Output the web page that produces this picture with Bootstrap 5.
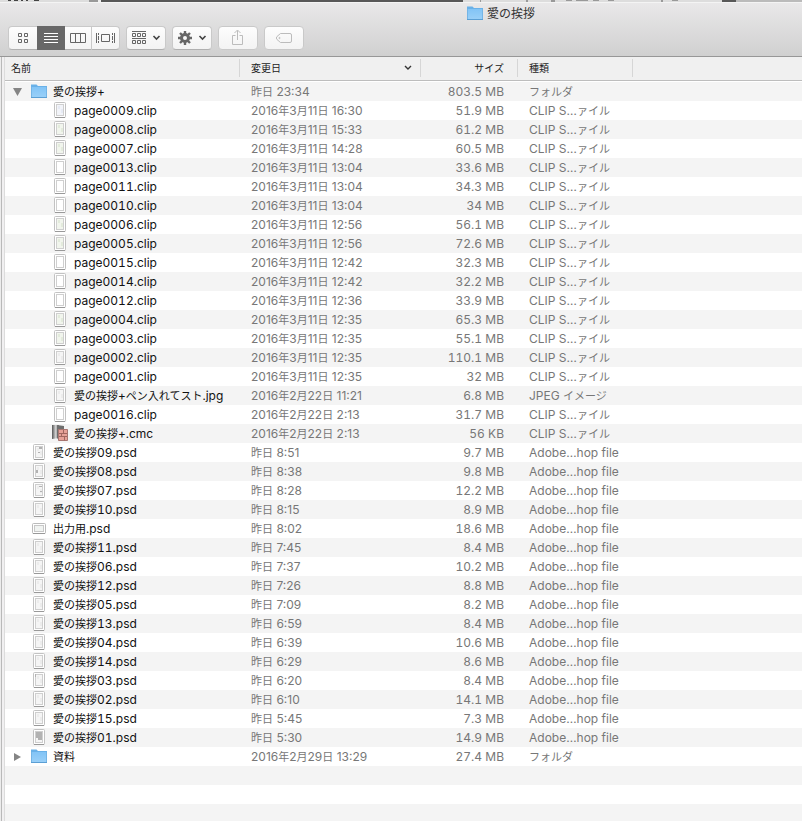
<!DOCTYPE html>
<html lang="ja">
<head>
<meta charset="utf-8">
<meta name="viewport" content="width=device-width, initial-scale=1">
<title>愛の挨拶</title>
<link href="https://cdn.jsdelivr.net/npm/bootstrap@5.3.0/dist/css/bootstrap.min.css" rel="stylesheet">
<style>
  body { font-family: Inter, "Noto Sans CJK JP", sans-serif; font-size: 12px; line-height: 19px; color: #111; background: #fff; }
  .behind { height: 2px; background: #585858; }
  .behind svg { display: block; }
  .toolbar-area { background: linear-gradient(#e9e8e9, #d0d0d0); border-top: 1px solid #f4f4f4; border-bottom: 1px solid #979797; padding-bottom: 6px; }
  .window-title { font-size: 12px; line-height: 22px; height: 23px; gap: 2px; padding-left: 198px; color: #333; font-weight: 400; }
  .tool { --bs-btn-padding-x: 0; --bs-btn-padding-y: 0; --bs-btn-border-radius: 4px; --bs-btn-line-height: 1;
    --bs-btn-border-color: #c9c9c9; --bs-btn-color: #666; --bs-btn-bg: #fbfbfb;
    --bs-btn-active-bg: #686868; --bs-btn-active-color: #fff; --bs-btn-active-border-color: #686868;
    --bs-btn-disabled-bg: #f5f5f5; --bs-btn-disabled-color: #bcbcbc; --bs-btn-disabled-border-color: #c9c9c9; --bs-btn-disabled-opacity: 1;
    height: 24px; width: 40px; display: flex; align-items: center; justify-content: center; border-bottom-color: #b0b0b0; }
  .tool:not(.active) { background-image: linear-gradient(#fdfdfd, #f3f3f3); }
  .view-modes .tool { width: 28px; flex: none; }
  .view-modes .tool:first-child { width: 30px; }
  .view-modes .tool:last-child { width: 29px; }
  .tool-bar { gap: 6px; padding-left: 8px; }
  .sidebar-edge { width: 5px; background: linear-gradient(90deg, #ececec 0 1px, #b9b9b9 1px 2px, #f1f0f1 2px 4px, #dcdcdc 4px 5px); }
  .file-pane { min-height: calc(100vh - 57px); background: repeating-linear-gradient(#f4f4f4 0 19px, #fff 19px 38px) 0 25px no-repeat; }
  .file-table { table-layout: fixed; width: 100%; margin: 0; }
  .file-table th { height: 23px; padding: 0; font-weight: 400; font-size: 10px; line-height: 22px; background: #f0f0f0; border-bottom: 1px solid #bdbdbd; color: #222; }
  .head-cell { display: flex; justify-content: space-between; align-items: center; width: 100%; height: 18px; line-height: 18px; border: 0; border-right: 1px solid #d6d6d6; background: none; padding: 0 8px 0 11px; color: inherit; }
  .head-cell.name-head { padding-left: 6px; }
  .head-cell.size-head { justify-content: flex-end; padding-right: 13px; }
  .head-gap td { height: 2px; padding: 0; background: #fff; }
  .file-row td { height: 19px; padding: 0 0 0 11px; line-height: 18px; vertical-align: middle; white-space: nowrap; color: #777; }
  .file-row td:first-child { color: #111; padding-left: 7px; }
  .file-row td:first-child, .file-row td:nth-child(3) { font-variant-numeric: tabular-nums; }
  .file-row td:nth-child(3) { text-align: right; padding: 0 14px 0 0; }
  .name-cell { height: 19px; gap: 4px; }
  .ja { font-size: 11px; line-height: 1; }
  .twist { width: 13px; height: 19px; }
  .file-icon { width: 20px; height: 19px; flex: none; }
  .nested { padding-left: 21px; }
  .col-name { width: 235px; } .col-date { width: 181px; } .col-size { width: 97px; } .col-kind { width: 115px; }
</style>
<script src="https://cdn.jsdelivr.net/npm/bootstrap@5.3.0/dist/js/bootstrap.bundle.min.js"></script>
</head>
<body class="overflow-hidden">

<svg class="visually-hidden" aria-hidden="true">
  <defs>
    <linearGradient id="folderFill" x1="0" y1="0" x2="0" y2="1"><stop offset="0" stop-color="#82c4f6"/><stop offset="1" stop-color="#9ad0f8"/></linearGradient>
    <linearGradient id="metalFill"><stop offset="0" stop-color="#555"/><stop offset=".5" stop-color="#ccc"/><stop offset="1" stop-color="#888"/></linearGradient>
  </defs>
  <symbol id="folder" viewBox="0 0 20 19">
    <path d="M2 2.500h5.500l1.500 1.500h9v12H2z" fill="#69b1e8"/>
    <path d="M2 5h16v10.500H2z" fill="url(#folderFill)"/>
    <path d="M2 15.500h16" stroke="#5b9fd4"/><path d="M2.500 5v10M17.500 5v10" stroke="#74b5e6"/>
  </symbol>
  <symbol id="page" viewBox="0 0 20 19">
    <rect x="4.500" y="1.500" width="11" height="15" rx="1" fill="#fff" stroke="#c2c2c2"/>
    <path d="M5 16.500h10" stroke="#999"/>
    <rect x="6.500" y="3.500" width="7" height="11" fill="none" stroke="#cfcfcf"/>
  </symbol>
  <symbol id="landscape" viewBox="0 0 20 19">
    <rect x="3.500" y="4.500" width="13" height="10" rx="1" fill="#fff" stroke="#bbb"/>
    <path d="M4 14.500h12" stroke="#999"/>
    <rect x="5.500" y="6.500" width="9" height="6" fill="#f0f3f1" stroke="#c8c8c8"/>
  </symbol>
  <symbol id="comic" viewBox="0 0 20 19">
    <path d="M2 1h7v13l-7 1z" fill="url(#metalFill)"/><path d="M7 1l7 1v12l-5 2-2-2z" fill="#6e6e6e"/>
    <path d="M8.500 5.500h9v11h-9z" fill="#e5a198" stroke="#a87570"/>
    <path d="M9 9.500h8M9 12.500h8M13.500 6v3.500M11.500 9.500v3M14.500 12.500v4" stroke="#a06660"/>
  </symbol>
</svg>

<div class="behind">
  <svg width="802" height="2" aria-hidden="true">
    <path d="M0 0h89v2H0zM463 0h259v2H463z" fill="#ddd"/><path d="M89 0h9v2h-9z" fill="#999"/><path d="M98 0h3v2h-3z" fill="#eee"/>
    <path d="M736 0h66v2h-66z" fill="#bbb"/><path d="M8 0h3v1H8zM14 0h4v1h-4zM21 0h2v1h-2zM26 0h2v1h-2zM34 0h5v1h-5z" fill="#444"/>
    <path d="M480 0h1v2h-1zM526 0h2v2h-2zM551 0h4v2h-4zM566 0h6v1h-6zM576 0h12v1h-12zM593 0h6v1h-6zM608 0h6v1h-6zM661 0h2v2h-2zM672 0h6v1h-6z" fill="#999"/>
  </svg>
</div>

<header class="toolbar-area">
  <h1 class="window-title d-flex justify-content-center align-items-start m-0">
    <svg width="20" height="21" aria-hidden="true"><use href="#folder"/></svg><span>愛の挨拶</span>
  </h1>
  <div class="tool-bar d-flex" role="toolbar" aria-label="ツールバー">
    <div class="btn-group view-modes" role="group" aria-label="表示">
      <button type="button" class="btn tool" aria-label="アイコン"><svg width="12" height="12" fill="none" stroke="currentColor"><path d="M1.500 1.500h3v3h-3zM7.500 1.500h3v3h-3zM1.500 7.500h3v3h-3zM7.500 7.500h3v3h-3z"/></svg></button>
      <button type="button" class="btn tool active" aria-label="リスト" aria-pressed="true"><svg width="14" height="12" stroke="currentColor"><path d="M0 1.500h14M0 4.500h14M0 7.500h14M0 10.500h14"/></svg></button>
      <button type="button" class="btn tool" aria-label="カラム"><svg width="16" height="12" fill="none" stroke="currentColor"><path d="M.5 1.500h15v9H.5zM5.500 1.500v9M10.500 1.500v9"/></svg></button>
      <button type="button" class="btn tool" aria-label="Cover Flow"><svg width="19" height="12" fill="none" stroke="currentColor"><path d="M.5 1v10M2.500 1v2M2.500 4v4M2.500 9v2M5.500 2.500h8v7h-8zM16.500 1v2M16.500 4v4M16.500 9v2M18.500 1v10"/></svg></button>
    </div>
    <button type="button" class="btn tool" aria-label="項目の並び順序"><svg width="30" height="14" fill="none" stroke="currentColor"><path d="M1 .5h14M1 7.500h14M1.500 2.500h3v3h-3zM6.500 2.500h3v3h-3zM11.500 2.500h3v3h-3zM1.500 9.500h3v3h-3zM6.500 9.500h3v3h-3zM11.500 9.500h3v3h-3z"/><path d="M22.500 5l3 3 3-3" stroke="#444" stroke-width="1.600"/></svg></button>
    <button type="button" class="btn tool" aria-label="操作"><svg width="30" height="16" fill="none" stroke="currentColor"><circle cx="8" cy="8" r="3.500" stroke-width="3"/><path d="M8 1v3M8 12v3M1 8h3M12 8h3M3 3l2 2M11 11l2 2M3 13l2-2M11 5l2-2" stroke-width="2.400"/><path d="M22.500 6l3 3 3-3" stroke="#444" stroke-width="1.600"/></svg></button>
    <button type="button" class="btn tool" aria-label="共有" disabled><svg width="14" height="18" fill="none" stroke="currentColor"><path d="M4.500 6.500h-3v9h10v-9h-3M6.500 11V1.500M3.500 4l3-3 3 3"/></svg></button>
    <button type="button" class="btn tool" aria-label="タグを編集" disabled><svg width="18" height="12" fill="none" stroke="currentColor"><path d="M5.500 1.500H15q1.500 0 1.500 1.500v6q0 1.500-1.500 1.500H5.500L2 7.500Q.5 6 2 4.500z"/><circle cx="4.500" cy="6" r=".6"/></svg></button>
  </div>
</header>

<main class="d-flex">
  <div class="sidebar-edge flex-shrink-0"></div>
  <div class="file-pane flex-grow-1">
    <table class="file-table">
      <colgroup><col class="col-name"><col class="col-date"><col class="col-size"><col class="col-kind"><col></colgroup>
      <thead>
        <tr>
          <th scope="col"><button type="button" class="head-cell name-head">名前</button></th>
          <th scope="col" aria-sort="descending"><button type="button" class="head-cell">変更日<svg width="8" height="6" fill="none" stroke="#333" stroke-width="1.400" aria-hidden="true"><path d="M1 1l3 3 3-3"/></svg></button></th>
          <th scope="col"><button type="button" class="head-cell size-head">サイズ</button></th>
          <th scope="col"><button type="button" class="head-cell">種類</button></th>
          <th></th>
        </tr>
      </thead>
      <tbody id="files"><tr class="head-gap"><td colspan="5"></td></tr></tbody>
    </table>
  </div>
</main>

<script>
  const CLIP = 'CLIP S…ァイル', PSD = 'Adobe…hop file', FOLDER = 'フォルダ';
  const green = '#e3ebdc', gray = '#ececec';
  // depth, icon, name, modified, size, kind, thumbnail tint
  const files = [[0, 'folder', '愛の挨拶+', '昨日 23:34', '803.5 MB', FOLDER, 'open']];
  [['09','3月11日 16:30','51.9','#e6eaf4'],['08','3月11日 15:33','61.2',green],['07','3月11日 14:28','60.5',green],
   ['13','3月11日 13:04','33.6'],['11','3月11日 13:04','34.3'],['10','3月11日 13:04','34'],
   ['06','3月11日 12:56','56.1',green],['05','3月11日 12:56','72.6',green],['15','3月11日 12:42','32.3'],
   ['14','3月11日 12:42','32.2'],['12','3月11日 12:36','33.9'],['04','3月11日 12:35','65.3',green],
   ['03','3月11日 12:35','55.1',green],['02','3月11日 12:35','110.1',gray],['01','3月11日 12:35','32']
  ].forEach(([n, d, s, t]) => files.push([1, 'page', `page00${n}.clip`, '2016年' + d, s + ' MB', CLIP, t]));
  files.push([1, 'page', '愛の挨拶+ペン入れてスト.jpg', '2016年2月22日 11:21', '6.8 MB', 'JPEG イメージ', gray],
             [1, 'page', 'page0016.clip', '2016年2月22日 2:13', '31.7 MB', CLIP],
             [1, 'comic', '愛の挨拶+.cmc', '2016年2月22日 2:13', '56 KB', CLIP]);
  [['愛の挨拶09','8:51','9.7'],['愛の挨拶08','8:38','9.8'],['愛の挨拶07','8:28','12.2'],['愛の挨拶10','8:15','8.9'],
   ['出力用','8:02','18.6'],['愛の挨拶11','7:45','8.4'],['愛の挨拶06','7:37','10.2'],['愛の挨拶12','7:26','8.8'],
   ['愛の挨拶05','7:09','8.2'],['愛の挨拶13','6:59','8.4'],['愛の挨拶04','6:39','10.6'],['愛の挨拶14','6:29','8.6'],
   ['愛の挨拶03','6:20','8.4'],['愛の挨拶02','6:10','14.1'],['愛の挨拶15','5:45','7.3'],['愛の挨拶01','5:30','14.9']
  ].forEach(([n, d, s]) => files.push([0, n === '出力用' ? 'landscape' : 'page', n + '.psd', '昨日 ' + d, s + ' MB', PSD, gray]));
  files.push([0, 'folder', '資料', '2016年2月29日 13:29', '27.4 MB', FOLDER]);

  const ja = s => s.replace(/[\u3040-\u30ff\u4e00-\u9fff]+/g, '<span class="ja">$&</span>');
  const marks = { '愛の挨拶09.psd': 'M10 4h3v2h-3zM9 9h2v1H9z', '愛の挨拶08.psd': 'M7 8h2v3H7z', '愛の挨拶07.psd': 'M10 5h3v1h-3zM11 10h2v1h-2z',
                  '愛の挨拶03.psd': 'M6 3h1v3H6z', '愛の挨拶01.psd': 'M7 4h6v6H7zM9 10h4v2H9z' };
  const thumb = (icon, name, tint) => {
    let extra = '';
    if (icon === 'page' && tint) extra += `<path d="M7 4h6v10H7z" fill="${tint}" opacity=".5"/><path d="M8 5h2v3H8zM11 8h2v4h-2z" fill="${tint}"/>`;
    if (marks[name]) extra += `<path d="${marks[name]}" fill="#b2b2b2"/>`;
    return `<svg class="file-icon" viewBox="0 0 20 19" aria-hidden="true"><use href="#${icon}"/>${extra}</svg>`;
  };
  const twist = (icon, open) => icon !== 'folder' ? '<span class="twist"></span>' :
    `<button type="button" class="twist btn p-0 border-0 d-flex align-items-center" aria-label="${open ? '閉じる' : '開く'}" aria-expanded="${!!open}">
     <svg width="12" height="10" fill="#858585" aria-hidden="true"><path d="${open ? 'M1 1h9l-4.500 8z' : 'M2 1v8l7-4z'}"/></svg></button>`;

  document.getElementById('files').insertAdjacentHTML('beforeend', files.map(([depth, icon, name, date, size, kind, tint]) =>
    `<tr class="file-row"><td><div class="name-cell d-flex align-items-center${depth ? ' nested' : ''}">${twist(icon, tint === 'open')}
     <span class="d-flex">${thumb(icon, name, tint)}</span><span>${ja(name)}</span></div></td>
     <td>${ja(date)}</td><td>${size}</td><td>${ja(kind)}</td><td></td></tr>`).join(''));
</script>
</body>
</html>
